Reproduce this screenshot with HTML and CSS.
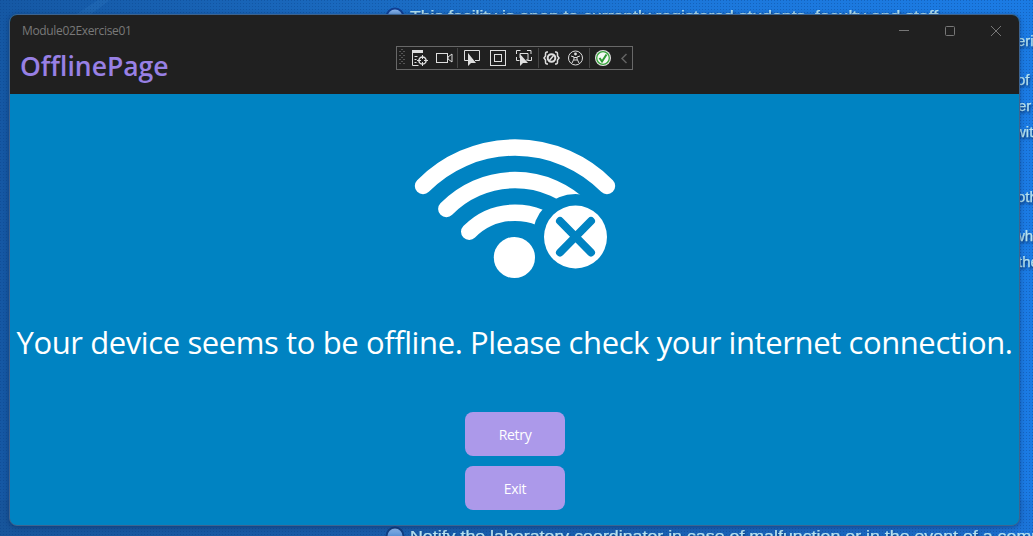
FILE: index.html
```html
<!DOCTYPE html>
<html lang="en">
<head>
<meta charset="utf-8">
<title>Module02Exercise01</title>
<link rel="stylesheet" href="styles.css">
</head>
<body>
<svg class="wallpaper" width="1033" height="536" aria-hidden="true">
  <defs>
    <linearGradient id="bg"><stop offset="0" stop-color="#1558a4"/><stop offset=".35" stop-color="#1a6ac0"/><stop offset=".7" stop-color="#1c78dc"/><stop offset="1" stop-color="#1b7be4"/></linearGradient>
    <linearGradient id="low"><stop offset="0" stop-color="#17559b"/><stop offset=".6" stop-color="#195fb0"/><stop offset=".96" stop-color="#1b6bc8"/><stop offset="1" stop-color="#1b76dc"/></linearGradient>
    <linearGradient id="ball" x2="0" y2="1"><stop offset="0" stop-color="#8db8ee"/><stop offset="1" stop-color="#2468b8"/></linearGradient>
    <pattern id="dots" width="3" height="3" patternUnits="userSpaceOnUse"><rect width="1" height="1" fill="#073c80" opacity=".35"/></pattern>
  </defs>
  <rect width="1033" height="536" fill="url(#bg)"/>
  <rect y="500" width="1033" height="36" fill="url(#low)"/>
  <path d="M75 15 98 0h12L90 15z" fill="#3b87cf" opacity=".2"/>
  <rect width="1033" height="536" fill="url(#dots)"/>
  <circle cx="395" cy="17" r="8.5" fill="url(#ball)" stroke="#103e91" stroke-width="2"/>
  <circle cx="395" cy="536" r="8.5" fill="url(#ball)" stroke="#103e81" stroke-width="2"/>
  <g class="poster">
    <text x="410" y="21" textLength="533" lengthAdjust="spacingAndGlyphs">This facility is open to currently registered students, faculty and staff.</text>
    <text x="410" y="541" textLength="641" lengthAdjust="spacingAndGlyphs">Notify the laboratory coordinator in case of malfunction or in the event of a compu</text>
    <text x="1017" y="46">eri</text><text x="1017" y="85">of</text><text x="1018" y="111">er</text><text x="1015" y="137">wit</text>
    <text x="1017" y="202">oth</text><text x="1014" y="241">whi</text><text x="1018" y="267">the</text>
  </g>
</svg>
<main class="window">
  <header class="titlebar">
    <div class="caption">
      <span class="app-name">Module02Exercise01</span>
      <svg class="controls" width="104" height="12" viewBox="0 0 104 12"><path d="M1 5.500h10M93 1l10 10M103 1 93 11"/><rect x="47.500" y="1.500" width="9" height="9" rx="1"/></svg>
    </div>
    <h1>OfflinePage</h1>
    <div class="toolbar">
      <svg width="235" height="22" viewBox="397 47 235 22">
        <path class="grip" d="M400 51v16M404 51v16"/><path class="grip" d="M402 49v16"/>
        <path class="sep" d="M457.500 48v20M538.500 48v20M589.500 48v20"/>
        <path class="solid" d="M412 50h11v3h-11z"/>
        <path class="line" d="M412.500 53v12.500h6M414.500 56.500h3M414.500 59.500h2M414.500 62.500h2"/>
        <circle class="line bold" cx="422.500" cy="60.500" r="3.600"/><path class="line" d="M422.500 55v4M422.500 62v4M417 60.500h4M424 60.500h4"/>
        <rect class="line" x="436.500" y="53.500" width="11" height="9"/><path class="line" d="m448 57 4-3v8l-4-3z"/>
        <path class="line" d="M468 60.500h-3.500v-10h15v10H475"/><path class="solid" d="M468 53v13l3-3h5z"/>
        <rect class="line" x="490.500" y="50.500" width="15" height="15"/><rect class="line" x="494.500" y="54.500" width="7" height="7"/>
        <path class="line" d="M516.500 54v-3.500h4M527 50.500h4V54M531.500 57v3.500h-4M516.500 57v3.500h3M520 58v-4.500h8V60h-2"/><path class="solid" d="M520 54v12l3-3h5z"/>
        <path class="line bold" d="M548 52h-1q-1.500 0-1.500 2v2l-1.500 2 1.500 2v2q0 2 1.500 2h1M555 52h1q1.500 0 1.500 2v2l1.500 2-1.500 2v2q0 2-1.500 2h-1"/><circle class="line heavy" cx="551.500" cy="58" r="3.800"/><path class="line bold" d="m549 61 5-6"/>
        <circle class="line" cx="575.500" cy="58" r="7"/><circle class="solid" cx="575.500" cy="54" r="1.400"/><path class="line" d="m571 56 3 1v2l-2 4M580 56l-3 1v2l2 4M574 57.500h3M574 60h3"/>
        <circle cx="603" cy="58" r="8" fill="#e4e4e4"/><circle cx="603" cy="58" r="6.300" fill="#f3f8f3" stroke="#35a33a" stroke-width="1.300"/><path d="m599.500 58 2.500 3.500 4.500-7" fill="none" stroke="#2d9833" stroke-width="2"/>
        <path d="m626.500 54-4.500 4.500 4.500 4.500" fill="none" stroke="#626262" stroke-width="1.500"/>
      </svg>
    </div>
  </header>
  <section class="content">
    <svg class="wifi" width="202" height="142" viewBox="414 138 202 142">
      <mask id="cut" maskUnits="userSpaceOnUse" x="414" y="138" width="202" height="142"><rect x="414" y="138" width="202" height="142" fill="#fff"/><circle cx="575.500" cy="237" r="43" fill="#000"/></mask>
      <g fill="none" stroke="#fff" stroke-width="16.400" stroke-linecap="round">
        <path d="M423 186A129.300 129.300 0 0 1 607 186"/>
        <g mask="url(#cut)"><path d="M446.300 209A96 96 0 0 1 583.700 209M469.200 231.800A64.500 64.500 0 0 1 560.800 231.800"/></g>
      </g>
      <circle cx="514.400" cy="257.500" r="20.600" fill="#fff"/><circle cx="575.500" cy="237" r="31.500" fill="#fff"/>
      <path d="m560 221 31 31.500M591 221l-31 31.500" stroke="#0083c2" stroke-width="8" stroke-linecap="round"/>
    </svg>
    <p class="message">Your device seems to be offline. Please check your internet connection.</p>
    <div class="actions"><button>Retry</button><button>Exit</button></div>
  </section>
</main>
</body>
</html>
```

FILE: styles.css
```css
* { box-sizing: border-box; }
body {
  margin: 0;
  width: 1033px;
  height: 536px;
  padding: 14px 13px 10px 9px;
  overflow: hidden;
  background: #1767bc;
  font-family: "Open Sans", "Noto Sans", sans-serif;
}
.wallpaper { position: absolute; inset: 0; }
.poster {
  font: 15px "Liberation Sans", sans-serif;
  fill: #b4e0ee;
  stroke: #b4e0ee;
  stroke-width: .25px;
  filter: drop-shadow(1px 2px 1px #0b3b7b);
}
.window {
  position: relative;
  height: 512px;
  border: 1px solid #3c6390;
  border-radius: 8px;
  overflow: hidden;
  background: #0083c2;
  box-shadow: 0 1px 5px rgba(0, 20, 60, .4);
}
.titlebar { position: relative; height: 79px; background: #202020; }
.caption {
  display: flex;
  justify-content: space-between;
  align-items: center;
  height: 31px;
  padding: 0 17px 0 12px;
}
.app-name { color: #797979; font-size: 12px; letter-spacing: -.35px; white-space: nowrap; }
.controls { fill: none; stroke: #777; stroke-width: 1; }
h1 {
  margin: 0;
  padding-left: 10px;
  color: #9880e5;
  font-size: 26.500px;
  line-height: 41px;
  font-weight: 600;
}
.toolbar {
  position: absolute;
  left: 386px;
  top: 31px;
  width: 237px;
  height: 24px;
  border: 1px solid #686868;
}
.toolbar svg { display: block; }
.line { fill: none; stroke: #dedede; stroke-width: 1; }
.bold { stroke-width: 1.5; }
.heavy { stroke-width: 2; }
.solid { fill: #dedede; }
.sep { stroke: #454545; }
.grip { stroke: #555; stroke-dasharray: 1 3; stroke-width: 2; }
.content { display: flex; flex-direction: column; align-items: center; padding-top: 44px; }
.wifi { display: block; margin-left: 1px; }
.message {
  margin: 40px 0 0;
  color: #fff;
  font-size: 31px;
  line-height: 44px;
  letter-spacing: -.4px;
  white-space: nowrap;
}
.actions { display: flex; flex-direction: column; gap: 10px; margin: 48px 0 0 1px; }
button {
  width: 100px;
  height: 44px;
  padding: 1px 0 0;
  border: 0;
  border-radius: 8px;
  background: #ac99ea;
  color: #fff;
  font: 14px "Open Sans", sans-serif;
  letter-spacing: -.3px;
}
```
